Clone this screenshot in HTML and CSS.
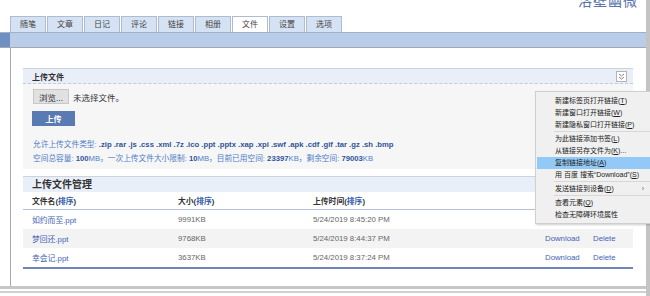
FILE: index.html
```html
<!DOCTYPE html>
<html>
<head>
    <title>文件</title>
    <link rel="stylesheet" href="styles.css">
</head>
<body>
    <div class="frame">
        <div class="header">
            <div class="logo-row"><span class="logo">洛壁幽微</span></div>
            <div class="tabs">
                <a class="tab">随笔</a>
                <a class="tab">文章</a>
                <a class="tab">日记</a>
                <a class="tab">评论</a>
                <a class="tab">链接</a>
                <a class="tab">相册</a>
                <a class="tab active">文件</a>
                <a class="tab">设置</a>
                <a class="tab">选项</a>
            </div>
        </div>
        <div class="bar"><div class="bar-left"></div></div>

        <div class="main">
            <div class="box">
                <div class="box-head">
                    <span class="box-title">上传文件</span>
                    <span class="toggle">
                        <svg width="7" height="7" viewBox="0 0 7 7"><path d="M1 1l2.5 2 2.5-2M1 4l2.5 2 2.5-2" fill="none" stroke="#777" stroke-width="0.9"/></svg>
                    </span>
                </div>
                <div class="box-body">
                    <div class="file-row">
                        <button class="browse">浏览...</button>
                        <span>未选择文件。</span>
                    </div>
                    <button class="upload">上传</button>
                    <div class="info first">允许上传文件类型: <b>.zip .rar .js .css .xml .7z .ico .ppt .pptx .xap .xpi .swf .apk .cdf .gif .tar .gz .sh .bmp</b></div>
                    <div class="info">空间总容量: <b>100</b>MB，一次上传文件大小限制: <b>10</b>MB，目前已用空间: <b>23397</b>KB，剩余空间: <b>79003</b>KB</div>
                </div>
            </div>

            <div class="manage">
                <div class="manage-head">上传文件管理</div>
                <div class="row head">
                    <span>文件名(<a>排序</a>)</span>
                    <span>大小(<a>排序</a>)</span>
                    <span>上传时间(<a>排序</a>)</span>
                    <span></span>
                    <span></span>
                </div>
                <div class="row">
                    <a class="name">如约而至.ppt</a>
                    <span>9991KB</span>
                    <span>5/24/2019 8:45:20 PM</span>
                    <a>Download</a>
                    <a>Delete</a>
                </div>
                <div class="row alt">
                    <a class="name">梦回还.ppt</a>
                    <span>9768KB</span>
                    <span>5/24/2019 8:44:37 PM</span>
                    <a>Download</a>
                    <a>Delete</a>
                </div>
                <div class="row last">
                    <a class="name">幸会记.ppt</a>
                    <span>3637KB</span>
                    <span>5/24/2019 8:37:24 PM</span>
                    <a>Download</a>
                    <a>Delete</a>
                </div>
            </div>
        </div>
        <div class="foot"></div>
    </div>

    <div class="menu">
        <div class="item">新建标签页打开链接(<u>T</u>)</div>
        <div class="item">新建窗口打开链接(<u>W</u>)</div>
        <div class="item">新建隐私窗口打开链接(<u>P</u>)</div>
        <div class="sep"></div>
        <div class="item">为此链接添加书签(<u>L</u>)</div>
        <div class="item">从链接另存文件为(<u>K</u>)...</div>
        <div class="item hi">复制链接地址(<u>A</u>)</div>
        <div class="item">用 百度 搜索“Download”(<u>S</u>)</div>
        <div class="sep"></div>
        <div class="item">发送链接到设备(<u>D</u>)<span class="arrow">›</span></div>
        <div class="sep"></div>
        <div class="item">查看元素(<u>Q</u>)</div>
        <div class="item">检查无障碍环境属性</div>
    </div>
</body>
</html>
```

FILE: styles.css
```css
body {
    margin: 0;
    background: #fff;
    font-family: "Liberation Sans", "Noto Sans CJK SC", sans-serif;
    font-size: 8px;
    color: #333;
    overflow: hidden;
}
.frame {
    width: 646px;
    height: 296px;
    border-right: 4px solid #c4c4c4;
}
.header {
    height: 32px;
}
.logo-row {
    height: 16px;
    overflow: hidden;
    display: flex;
    justify-content: flex-end;
    padding-right: 8px;
}
.logo {
    font-size: 14px;
    line-height: 14px;
    margin-top: -6px;
    color: #5874aa;
    letter-spacing: 1px;
}
.tabs {
    display: flex;
    padding-left: 10px;
    height: 16px;
    align-items: flex-end;
}
.tab {
    width: 34px;
    height: 15px;
    line-height: 15px;
    text-align: center;
    background: #d5e2f3;
    border: 1px solid #aebbd0;
    border-bottom: none;
    margin-right: 1px;
    color: #444;
    font-size: 8px;
}
.tab.active {
    background: #fff;
}
.bar {
    height: 14px;
    background: #b9cde9;
    border-top: 1px solid #9fb0c8;
    border-bottom: 1px solid #a4a9b0;
}
.bar-left {
    width: 10px;
    height: 14px;
    background: #6f8fc3;
}
.main {
    margin-left: 10px;
    border-left: 1px solid #a9a9a9;
    padding: 20px 13px 18px 12px;
    height: 200px;
}
.box {
    border-top: 1px solid #cdd3dc;
}
.box-head {
    height: 14px;
    background: #e9eff8;
    border-bottom: 1px dashed #c6cbd2;
    display: flex;
    align-items: center;
    justify-content: space-between;
    padding: 0 6px 0 9px;
}
.box-title {
    font-weight: bold;
    font-size: 8px;
    color: #333;
}
.toggle {
    width: 9px;
    height: 9px;
    border: 1px solid #b4b4b4;
    background: #fff;
    display: flex;
    align-items: center;
    justify-content: center;
}
.box-body {
    background: #f6f6f6;
    padding: 5px 10px 3px 10px;
}
.file-row {
    display: flex;
    align-items: center;
    gap: 4px;
    color: #333;
    font-size: 8.5px;
}
.browse {
    height: 15px;
    padding: 0 5px;
    border: 1px solid #c8c8c8;
    background: #e1e1e1;
    font-family: inherit;
    font-size: 8.5px;
    color: #333;
}
.upload {
    display: block;
    margin-top: 7px;
    width: 43px;
    height: 15px;
    border: none;
    background: #5a7ab3;
    color: #fff;
    font-weight: bold;
    font-family: inherit;
    font-size: 8px;
    margin-left: -1px;
}
.info {
    color: #4d7dc6;
    line-height: 14px;
    font-size: 7.7px;
    white-space: nowrap;
}
.info.first {
    margin-top: 12px;
}
.info b {
    color: #2e5598;
}
.manage {
    margin-top: 7px;
}
.manage-head {
    height: 15px;
    line-height: 15px;
    background: #e9eff8;
    border-top: 1px solid #cdd3dc;
    padding-left: 9px;
    font-weight: bold;
    font-size: 10px;
    color: #333;
}
.row {
    display: grid;
    grid-template-columns: 146px 135px 232px 48px 1fr;
    height: 19px;
    align-items: center;
    padding-left: 9px;
    color: #666;
    font-size: 7.8px;
}
.row.head {
    height: 17px;
    font-weight: bold;
    color: #333;
    border-bottom: 1px solid #b3c0d7;
}
.row.head a {
    color: #2f58a6;
}
.row a {
    color: #3f64b3;
}
.row.alt {
    background: #f3f3f3;
}
.row.last {
    border-bottom: 2px solid #7085ba;
}
.foot {
    height: 2px;
    border-top: 3px solid #c6c6c6;
    border-bottom: 2px solid #d0d0d0;
}
.menu {
    position: absolute;
    left: 535px;
    top: 91px;
    width: 115px;
    padding: 3px 0 2px 0;
    background: #f0f0f0;
    border: 1px solid #cfcfcf;
    border-right: none;
    box-shadow: 1px 1px 2px rgba(0, 0, 0, 0.2);
    font-size: 7px;
    color: #222;
}
.item {
    height: 12px;
    line-height: 12px;
    padding-left: 18px;
    margin: 0 1px;
    position: relative;
    white-space: nowrap;
}
.item u {
    text-decoration: underline;
}
.item.hi {
    background: #92c9f7;
}
.sep {
    height: 1px;
    margin: 0 0 1px 18px;
    background: #d7d7d7;
}
.arrow {
    position: absolute;
    right: 6px;
    color: #666;
}
```
